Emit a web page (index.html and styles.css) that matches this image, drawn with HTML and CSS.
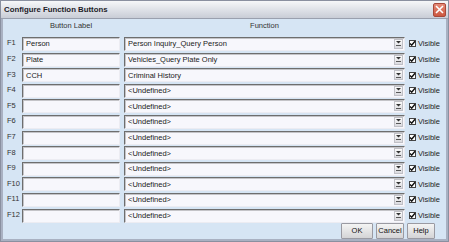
FILE: index.html
```html
<!DOCTYPE html>
<html lang="en">
<head>
    <meta charset="UTF-8">
    <meta name="viewport" content="width=device-width, initial-scale=1.0">
    <title>Configure Function Buttons</title>
    <link rel="stylesheet" href="styles.css">
</head>
<body>
    <div class="window">
        <div class="titlebar">
            <span class="title">Configure Function Buttons</span>
            <span class="close">
                <svg width="9" height="9" viewBox="0 0 9 9"><path d="M1 1L8 8M8 1L1 8" stroke="#fff" stroke-width="1.6" fill="none"/></svg>
            </span>
        </div>
        <div class="content">
            <div class="grid" id="grid">
                <span></span>
                <span class="head">Button Label</span>
                <span class="head">Function</span>
                <span></span>
            </div>
            <div class="buttons">
                <button class="btn ok">OK</button>
                <button class="btn cancel">Cancel</button>
                <button class="btn help">Help</button>
            </div>
        </div>
    </div>

    <script>
        const rows = [
            ['Person', 'Person Inquiry_Query Person'],
            ['Plate', 'Vehicles_Query Plate Only'],
            ['CCH', 'Criminal History']
        ];
        const grid = document.getElementById('grid');

        for (let i = 0; i < 12; i++) {
            const label = rows[i] ? rows[i][0] : '';
            const func = rows[i] ? rows[i][1] : '<Undefined>';
            const key = document.createElement('span');
            key.className = 'key';
            key.textContent = 'F' + (i + 1);

            const input = document.createElement('div');
            input.className = 'field';
            input.textContent = label;

            const select = document.createElement('div');
            select.className = 'field select';
            const text = document.createElement('span');
            text.className = 'select-text';
            text.textContent = func;
            const arrow = document.createElement('span');
            arrow.className = 'arrow';
            arrow.innerHTML = '<svg width="5" height="5" viewBox="0 0 5 5"><path d="M0 0H5L2.5 2.6Z" fill="#333"/><path d="M0 4.5H5" stroke="#333" stroke-width="0.8"/></svg>';
            select.append(text, arrow);

            const vis = document.createElement('label');
            vis.className = 'visible';
            vis.innerHTML = '<span class="check"><svg width="7" height="7" viewBox="0 0 7 7"><path d="M1 3.5L2.7 5.3L6 1.2" stroke="#111" stroke-width="1.4" fill="none"/></svg></span>Visible';

            grid.append(key, input, select, vis);
        }
    </script>
</body>
</html>
```

FILE: styles.css
```css
body {
    margin: 0;
    padding: 0;
    background: #d6e5f4;
    font-family: "Liberation Sans", Arial, sans-serif;
    font-size: 7.5px;
    color: #222;
}

.window {
    width: 449px;
    height: 242px;
    box-sizing: border-box;
    border: 1px solid #8a90a0;
    background: #d6e5f4;
    display: flex;
    flex-direction: column;
    overflow: hidden;
}

.titlebar {
    height: 17px;
    flex: none;
    display: flex;
    align-items: center;
    padding-left: 3px;
    background: linear-gradient(#f6f7f9, #dfe2e8 50%, #c9cdd6);
    border-bottom: 1px solid #9aa0ae;
}

.title {
    font-weight: bold;
    font-size: 7.8px;
    color: #1c1c28;
}

.close {
    margin-left: auto;
    margin-right: 2px;
    width: 13px;
    height: 14px;
    box-sizing: border-box;
    border: 1px solid #a8483a;
    border-radius: 2px;
    background: linear-gradient(#e58a78, #cc5840);
    display: flex;
    align-items: center;
    justify-content: center;
}

.content {
    flex: 1;
    border-left: 2px solid #a9b1c2;
    border-right: 2px solid #a9b1c2;
    border-bottom: 2px solid #a9b1c2;
    display: flex;
    flex-direction: column;
}

.grid {
    display: grid;
    grid-template-columns: 15px 98px 281px 1fr;
    grid-template-rows: 16.4px;
    grid-auto-rows: 14px;
    column-gap: 4px;
    row-gap: 1.6px;
}

.head {
    text-align: center;
    align-self: center;
    padding-bottom: 3px;
    color: #333;
}

.key {
    padding-left: 4px;
    align-self: center;
    padding-bottom: 2px;
    color: #333;
}

.field {
    box-sizing: border-box;
    height: 14px;
    background: #f7f7fc;
    border: 1px solid #ececf2;
    border-top-color: #6e6e6e;
    border-left-color: #6e6e6e;
    box-shadow: inset 1px 1px 0 #c4c4c8;
    padding-left: 3px;
    display: flex;
    align-items: center;
    color: #1a1a1a;
    white-space: nowrap;
}

.select {
    padding-right: 1px;
}

.select-text {
    flex: 1;
    overflow: hidden;
}

.arrow {
    width: 9px;
    height: 10px;
    box-sizing: border-box;
    border: 1px solid #c0c0c6;
    background: linear-gradient(#fafafa, #dadadf);
    display: flex;
    align-items: center;
    justify-content: center;
}

.visible {
    display: flex;
    align-items: center;
    gap: 2px;
    color: #222;
}

.check {
    width: 7px;
    height: 7px;
    box-sizing: border-box;
    border: 1px solid #444;
    background: #fff;
    display: flex;
    align-items: center;
    justify-content: center;
}

.check svg {
    flex: none;
}

.buttons {
    display: flex;
    justify-content: flex-end;
    gap: 3px;
    margin-top: 0.4px;
    padding-right: 11px;
}

.btn {
    height: 16px;
    padding: 0;
    font-family: "Liberation Sans", Arial, sans-serif;
    font-size: 7.5px;
    color: #111;
    background: linear-gradient(#f4f4f4, #d4d4d6);
    border: 1px solid #9a9aa2;
    border-radius: 1px;
}

.ok {
    width: 32px;
}

.cancel,
.help {
    width: 28px;
}
```
